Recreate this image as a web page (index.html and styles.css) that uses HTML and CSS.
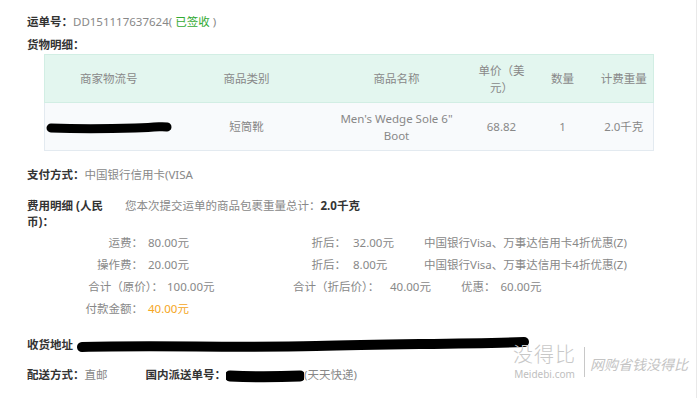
FILE: index.html
```html
<!DOCTYPE html>
<html lang="zh-CN">
<head>
<meta charset="utf-8">
<title>运单详情</title>
<link rel="stylesheet" href="styles.css">
</head>
<body>
<div class="page">
  <div class="line first"><span class="lbl">运单号：</span><span class="val">DD151117637624( <span class="ok">已签收</span> )</span></div>
  <div class="line second"><span class="lbl">货物明细：</span></div>

  <table class="goods">
    <colgroup>
      <col class="c1"><col class="c2"><col class="c3"><col class="c4"><col class="c5"><col class="c6">
    </colgroup>
    <thead>
      <tr>
        <th>商家物流号</th>
        <th>商品类别</th>
        <th>商品名称</th>
        <th class="narrow">单价（美元）</th>
        <th>数量</th>
        <th>计费重量</th>
      </tr>
    </thead>
    <tbody>
      <tr>
        <td class="left"><svg class="blot" width="130" height="14" viewBox="0 0 130 14"><path d="M6 7 C 30 8, 60 8, 90 7 S 115 5, 122 6" fill="none" stroke="#000" stroke-width="9" stroke-linecap="round"/></svg></td>
        <td>短筒靴</td>
        <td class="name">Men's Wedge Sole 6" Boot</td>
        <td>68.82</td>
        <td>1</td>
        <td>2.0千克</td>
      </tr>
    </tbody>
  </table>

  <div class="line pay"><span class="lbl">支付方式：</span><span class="val">中国银行信用卡(VISA</span></div>

  <div class="fee-head">
    <div class="fee-title">费用明细 (人民币)：</div>
    <div class="fee-total">您本次提交运单的商品包裹重量总计：<b>2.0千克</b></div>
  </div>

  <div class="fees">
    <div class="fee-row">
      <div class="k">运费：</div><div class="v">80.00元</div><div class="k2">折后：</div><div class="v2">32.00元</div><div class="note">中国银行Visa、万事达信用卡4折优惠(Z)</div>
    </div>
    <div class="fee-row">
      <div class="k">操作费：</div><div class="v">20.00元</div><div class="k2">折后：</div><div class="v2">8.00元</div><div class="note">中国银行Visa、万事达信用卡4折优惠(Z)</div>
    </div>
    <div class="fee-row total">
      <div class="k">合计（原价）：</div><div class="v">100.00元</div><div class="k2">合计（折后价）：</div><div class="v2">40.00元</div><div class="note"><span class="off">优惠：</span>60.00元</div>
    </div>
    <div class="fee-row">
      <div class="k">付款金额：</div><div class="v pay-amt">40.00元</div>
    </div>
  </div>

  <div class="line addr"><span class="lbl">收货地址</span><svg class="blot addr-blot" width="456" height="18" viewBox="0 0 456 18"><path d="M6 11 C 80 9, 160 12, 240 10 S 380 8, 448 6" fill="none" stroke="#000" stroke-width="10" stroke-linecap="round"/></svg></div>

  <div class="line ship">
    <span class="lbl">配送方式：</span><span class="val">直邮</span>
    <span class="lbl domestic">国内派送单号：</span><svg class="blot" width="78" height="16" viewBox="0 0 78 16"><path d="M4 8 C 25 9, 50 9, 74 8" fill="none" stroke="#000" stroke-width="11" stroke-linecap="round"/></svg><span class="val">(天天快递)</span>
  </div>

  <div class="watermark">
    <div class="wm-left">
      <div class="wm-big">没得比</div>
      <div class="wm-small">Meidebi.com</div>
    </div>
    <div class="wm-sep"></div>
    <div class="wm-slogan">网购省钱没得比</div>
  </div>
</div>
</body>
</html>
```

FILE: styles.css
```css
html, body {
  margin: 0;
  padding: 0;
  background: #fff;
}

body {
  font-family: "Noto Sans", "Noto Sans CJK SC", sans-serif;
  font-size: 11.5px;
  color: #888;
}

.page {
  position: relative;
  width: 697px;
  height: 398px;
  border-right: 1px solid #e9e9e9;
  padding-left: 27px;
  box-sizing: border-box;
  overflow: hidden;
}

.line {
  line-height: 18px;
  height: 18px;
  white-space: nowrap;
}

.first { padding-top: 13px; }
.second { margin-top: 5px; }

.lbl {
  color: #333;
  font-weight: bold;
}

.val { color: #888; }
.ok { color: #33aa33; }

/* goods table */
.goods {
  margin-left: 17px;
  width: 609px;
  table-layout: fixed;
  border-collapse: collapse;
}

.goods col.c1 { width: 128px; }
.goods col.c2 { width: 148px; }
.goods col.c3 { width: 152px; }
.goods col.c4 { width: 58px; }
.goods col.c5 { width: 64px; }
.goods col.c6 { width: 59px; }

.goods thead tr { border: 1px solid #d2eee4; }
.goods tbody tr { border: 1px solid #e3eaf0; border-top: none; }

.goods th {
  height: 47px;
  background: #e3f6ef;
  font-weight: normal;
  color: #888;
  text-align: center;
  padding: 0 5px;
  line-height: 17px;
}

.goods th.narrow { padding: 0 4px; }

.goods td {
  height: 47px;
  background: #f8fafc;
  color: #888;
  text-align: center;
  padding: 0 5px;
  line-height: 17px;
}

.goods td.left { text-align: left; padding: 0; }
.goods td.name { padding: 0 14px; }

.blot { vertical-align: middle; display: inline-block; }

.pay { margin-top: 15px; }

/* fee block */
.fee-head {
  display: flex;
  margin-top: 14px;
  line-height: 16px;
}

.fee-title {
  width: 78px;
  color: #333;
  font-weight: bold;
  margin-right: 20px;
}

.fee-total { color: #888; }
.fee-total b { color: #333; }

.fees {
  margin-top: 2px;
  line-height: 22px;
  white-space: nowrap;
}

.fee-row {
  display: flex;
  height: 22px;
}

.fee-row .k { width: 116px; text-align: right; }
.fee-row .v { width: 120px; margin-left: 5px; }
.fee-row .k2 { width: 78px; text-align: right; }
.fee-row .v2 { width: 71px; margin-left: 7px; }

.fee-row.total .k { width: 136px; }
.fee-row.total .v { width: 126px; margin-left: 4px; }
.fee-row.total .k2 { width: 97px; text-align: left; }
.fee-row.total .v2 { width: 71px; margin-left: 0; }

.off { margin-right: 5px; }

.pay-amt { color: #f5a623; }

.addr { margin-top: 16px; }
.addr-blot { margin-left: 3px; margin-top: -2px; }

.ship { margin-top: 12px; }
.domestic { margin-left: 35px; }

/* watermark overlay */
.watermark {
  position: absolute;
  left: 513px;
  top: 344px;
  display: flex;
  align-items: center;
  color: #c4c4c4;
}

.wm-left {
  display: flex;
  flex-direction: column;
  align-items: center;
}

.wm-big {
  font-size: 20px;
  line-height: 22px;
  letter-spacing: 1px;
  font-weight: 300;
  color: #c8c8c8;
}

.wm-small {
  font-size: 10px;
  line-height: 12px;
  margin-top: 2px;
  color: #c0c0c0;
}

.wm-sep {
  width: 1px;
  height: 30px;
  background: #c8c8c8;
  margin: 0 5px 0 8px;
}

.wm-slogan {
  font-size: 14px;
  font-style: italic;
  color: #c4c4c4;
  margin-top: 3px;
}
```
